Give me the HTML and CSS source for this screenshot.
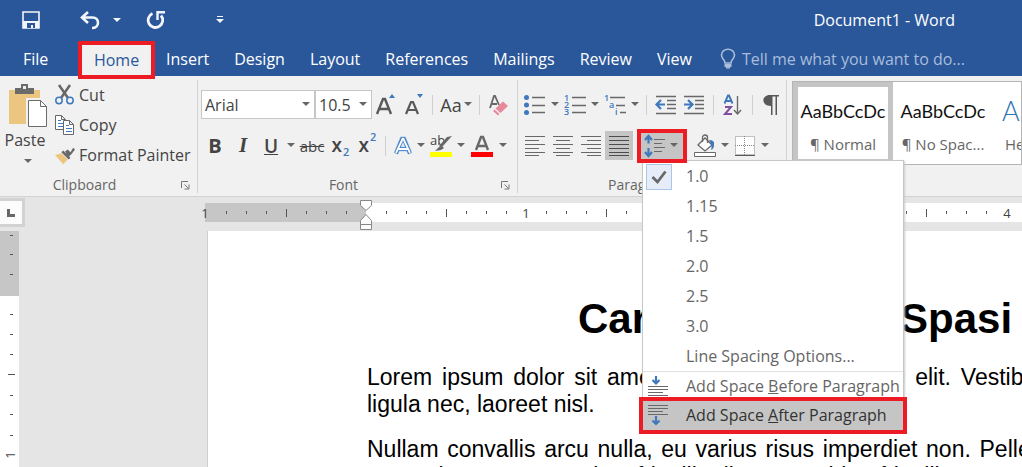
FILE: index.html
```
<!DOCTYPE html>
<html lang="en">
<head>
<meta charset="utf-8">
<title>Document1 - Word</title>
<link rel="stylesheet" href="styles.css">
</head>
<body>
<div class="app">
  <header class="titlebar">
    <div class="quick">
      <button class="qbtn" aria-label="Save"><svg width="18" height="18" viewBox="0 0 18 18"><path d="M1 1h16v16H1z" fill="none" stroke="#f3f6fb" stroke-width="1.6"/><path d="M1 10h16v7H1z" fill="#f3f6fb"/><path d="M5 12h8v5h-2v-3H9v3H5z" fill="#2a579a"/></svg></button>
      <button class="qbtn qbtn-undo" aria-label="Undo"><svg width="20" height="19" viewBox="0 0 20 19"><path d="M8 1L2 6.500l6 5.500M3 6.500h9.500c3.500 0 5.500 2.300 5.500 5.200s-2.200 5.300-6 5.300" fill="none" stroke="#f3f6fb" stroke-width="2.600"/></svg></button>
      <button class="qcaret" aria-label="Undo history"><svg width="8" height="5"><path d="M0 0h8L4 4z" fill="#f3f6fb"/></svg></button>
      <button class="qbtn qbtn-redo" aria-label="Repeat"><svg width="20" height="20" viewBox="0 0 20 20"><path d="M6.500 3.500A7.300 7.300 0 1 0 15 5.500" fill="none" stroke="#f3f6fb" stroke-width="2.800"/><path d="M11.500 10V2.200H19" fill="none" stroke="#f3f6fb" stroke-width="2.400"/></svg></button>
      <button class="qbtn qbtn-more" aria-label="Customize Quick Access Toolbar"><svg width="8" height="8"><path d="M1 .500h6" stroke="#f3f6fb"/><path d="M0 3h8L4 7z" fill="#f3f6fb"/></svg></button>
    </div>
    <div class="doc-name">Document1 - Word</div>
  </header>

  <nav class="tabs">
    <a class="tab tab-file" href="#file">File</a>
    <a class="tab tab-home" href="#home">Home</a>
    <a class="tab" href="#insert">Insert</a>
    <a class="tab" href="#design">Design</a>
    <a class="tab" href="#layout">Layout</a>
    <a class="tab" href="#references">References</a>
    <a class="tab" href="#mailings">Mailings</a>
    <a class="tab" href="#review">Review</a>
    <a class="tab" href="#view">View</a>
    <a class="tell" href="#tell"><svg width="16" height="20" viewBox="0 0 16 20"><path d="M5 14c0-3-3.500-4-3.500-8a6.200 5.500 0 0 1 13 0c0 4-3.500 5-3.500 8z" fill="none" stroke="#a9bddb" stroke-width="1.600"/><path d="M4.500 15h7v3h-1.500v1.500H6V18H4.500z" fill="#a9bddb"/></svg>Tell me what you want to do...</a>
  </nav>

  <main class="ribbon">
    <section class="group clipboard">
      <div class="clip-body">
        <button class="paste"><svg width="39" height="44" viewBox="0 0 39 44"><path d="M0 6h31v34H0z" fill="#ecc680"/><path d="M6 4h6V0h7v4h6v6H6z" fill="#6b6b6b"/><path d="M14 2h3v3h-3z" fill="#f1f1f1"/><path d="M17 14h22v30H17z" fill="#f1f1f1"/><path d="M19.500 16.500h12l6 6v20h-18z" fill="#fff" stroke="#6b6b6b"/><path d="M31.500 16.500v6h6" fill="none" stroke="#6b6b6b"/></svg><span>Paste</span><svg class="caret" width="8" height="5"><path d="M0 0h8L4 4z"/></svg></button>
        <div class="clip-list">
          <button><svg width="20" height="20" viewBox="0 0 20 20"><path d="M4 0l9 13M15 0L6 13" stroke="#686868" stroke-width="2.500"/><circle cx="4" cy="15.500" r="3.200" fill="none" stroke="#3f78bd" stroke-width="1.500"/><circle cx="15" cy="15.500" r="3.200" fill="none" stroke="#3f78bd" stroke-width="1.500"/></svg>Cut</button>
          <button><svg width="20" height="20" viewBox="0 0 20 20"><path d="M.500.500h6l4 4v10H.500zM6.500.500v4h4" fill="#fff" stroke="#686868"/><path d="M3 5.500h3M3 8.500h5M3 11.500h5" stroke="#3f78bd"/><path d="M8.500 5.500h6l4 4v10h-10zM14.500 5.500v4h4" fill="#fff" stroke="#686868"/><path d="M11 10.500h3M11 13.500h6M11 16.500h6" stroke="#3f78bd"/></svg>Copy</button>
          <button><svg width="22" height="19" viewBox="0 0 22 19"><path d="M0 9l7-2 7 7-5 5z" fill="#ecc680"/><path d="M7 6l2-2 8 8-2 2zM11 5l3-2 3 3 3-5 2 2-4 5-3 3z" fill="#686868"/></svg>Format Painter</button>
        </div>
      </div>
      <footer class="group-label">Clipboard<button class="launch" aria-label="Clipboard settings"><svg width="9" height="9"><path d="M.500 7V.500H7M3.500 3.500L7 7M8 3.500V8H3.500" fill="none" stroke="#777"/></svg></button></footer>
    </section>

    <section class="group font">
      <div class="rows">
        <div class="row row-font">
          <button class="combo combo-name">Arial<svg class="caret" width="8" height="5"><path d="M0 0h8L4 4z"/></svg></button>
          <button class="combo combo-size">10.5<svg class="caret" width="8" height="5"><path d="M0 0h8L4 4z"/></svg></button>
          <button class="tool" aria-label="Grow font"><svg width="20" height="22" viewBox="0 0 20 22"><path d="M1 20L7 5h2l6 15M3.500 15h9" fill="none" stroke="#595959" stroke-width="2.400"/><path d="M13 4l3-4 3 4z" fill="#3f78bd"/></svg></button>
          <button class="tool" aria-label="Shrink font"><svg width="20" height="22" viewBox="0 0 20 22"><path d="M2 20L7 8h2l5 12M4 16h8" fill="none" stroke="#595959" stroke-width="2.200"/><path d="M13 0l3 4 3-4z" fill="#3f78bd"/></svg></button>
          <i class="sep"></i>
          <button class="tool tool-case">Aa<svg class="caret" width="8" height="5"><path d="M0 0h8L4 4z"/></svg></button>
          <i class="sep"></i>
          <button class="tool tool-wide" aria-label="Clear formatting"><svg width="20" height="22" viewBox="0 0 20 22"><path d="M1 14L5 2h1l4 9M3 10h5" fill="none" stroke="#686868" stroke-width="1.800"/><path d="M14 7.500l5 4.500-7.500 7-5-4.500z" fill="#e8889b"/><path d="M5.500 15.500l5 4.500-1.500 1.500-5-4.500z" fill="#e8889b"/></svg></button>
        </div>
        <div class="row row-style">
          <button class="tool bold">B</button>
          <button class="tool italic">I</button>
          <button class="tool underline">U</button>
          <button class="drop" aria-label="Underline styles"><svg class="caret" width="8" height="5"><path d="M0 0h8L4 4z"/></svg></button>
          <button class="tool strike">abc</button>
          <button class="tool script">x<sub>2</sub></button>
          <button class="tool script">x<sup>2</sup></button>
          <i class="sep"></i>
          <button class="tool tool-slim" aria-label="Text effects"><svg width="20" height="22" viewBox="0 0 20 22"><path d="M3 18.500L9 4h2l6 14.500M5.500 14h9" fill="none" stroke="#a9cdf0" stroke-width="5"/><path d="M3 18.500L9 4h2l6 14.500M5.500 14h9" fill="none" stroke="#3f78bd" stroke-width="3.600"/><path d="M3 18L9.500 4h1L17 18M5.500 14h9" fill="none" stroke="#fff" stroke-width="1.800"/></svg></button>
          <button class="drop" aria-label="Text effect options"><svg class="caret" width="8" height="5"><path d="M0 0h8L4 4z"/></svg></button>
          <button class="tool" aria-label="Highlight"><svg width="22" height="22" viewBox="0 0 22 22"><text x="0" y="10" class="glyph">ab</text><path d="M22 1l-10 11-3-1 8-9zM11 10l3 3-3 2-6 1z" fill="#686868"/><path d="M0 17h22v5H0z" fill="#ff0"/></svg></button>
          <button class="drop" aria-label="Highlight colors"><svg class="caret" width="8" height="5"><path d="M0 0h8L4 4z"/></svg></button>
          <button class="tool tool-wide" aria-label="Font color"><svg width="22" height="22" viewBox="0 0 22 22"><path d="M5 15L10 2h2l5 13M7 11h8" fill="none" stroke="#686868" stroke-width="2.400"/><path d="M0 17h22v5H0z" fill="red"/></svg></button>
          <button class="drop" aria-label="Font colors"><svg class="caret" width="8" height="5"><path d="M0 0h8L4 4z"/></svg></button>
        </div>
      </div>
      <footer class="group-label">Font<button class="launch" aria-label="Font settings"><svg width="9" height="9"><path d="M.500 7V.500H7M3.500 3.500L7 7M8 3.500V8H3.500" fill="none" stroke="#777"/></svg></button></footer>
    </section>

    <section class="group paragraph">
      <div class="rows">
        <div class="row row-list">
          <button class="tool" aria-label="Bullets"><svg width="22" height="20" viewBox="0 0 22 20"><path d="M8 2.500h13M8 10.500h13M8 17.500h13" stroke="#686868" stroke-width="1.400"/><g fill="#3f78bd"><circle cx="2.500" cy="2.500" r="2.500"/><circle cx="2.500" cy="10" r="2.500"/><circle cx="2.500" cy="17.500" r="2.500"/></g></svg></button>
          <button class="drop" aria-label="Bullet styles"><svg class="caret" width="8" height="5"><path d="M0 0h8L4 4z"/></svg></button>
          <button class="tool" aria-label="Numbering"><svg width="22" height="22" viewBox="0 0 22 22"><path d="M8 3.500h14M8 11.500h14M8 18.500h14" stroke="#686868" stroke-width="1.400"/><g class="num"><text x="0" y="7">1</text><text x="0" y="14">2</text><text x="0" y="21">3</text></g></svg></button>
          <button class="drop" aria-label="Numbering styles"><svg class="caret" width="8" height="5"><path d="M0 0h8L4 4z"/></svg></button>
          <button class="tool" aria-label="Multilevel list"><svg width="22" height="22" viewBox="0 0 22 22"><path d="M6 3.500h15M12 11.500h9M16 18.500h6" stroke="#686868" stroke-width="1.400"/><g class="num"><text x="0" y="7">1</text><text x="5" y="14">a</text><text x="11" y="21">i</text></g></svg></button>
          <button class="drop" aria-label="Multilevel styles"><svg class="caret" width="8" height="5"><path d="M0 0h8L4 4z"/></svg></button>
          <i class="sep"></i>
          <button class="tool" aria-label="Decrease indent"><svg width="22" height="20" viewBox="0 0 22 20"><path d="M1 1.500h20M12 5.500h9M12 9.500h9M12 13.500h9M1 18.500h20" stroke="#686868" stroke-width="1.400"/><path d="M10 9.500H2M6 5L1.500 9.500 6 14" fill="none" stroke="#3f78bd" stroke-width="2.200"/></svg></button>
          <button class="tool" aria-label="Increase indent"><svg width="22" height="20" viewBox="0 0 22 20"><path d="M1 1.500h20M12 5.500h9M12 9.500h9M12 13.500h9M1 18.500h20" stroke="#686868" stroke-width="1.400"/><path d="M1 9.500h8M5 5l4.500 4.500L5 14" fill="none" stroke="#3f78bd" stroke-width="2.200"/></svg></button>
          <i class="sep"></i>
          <button class="tool" aria-label="Sort"><svg width="20" height="22" viewBox="0 0 20 22"><path d="M1.500 9.500L5 1.500h1l3.500 8M3 7h5" fill="none" stroke="#3f78bd" stroke-width="1.900"/><path d="M2 13h6L2 20h7" fill="none" stroke="#8050a0" stroke-width="2"/><path d="M14.500 2v18M11 16l3.500 4 3.500-4" fill="none" stroke="#686868" stroke-width="1.400"/></svg></button>
          <i class="sep"></i>
          <button class="tool tool-slim" aria-label="Show marks"><svg width="16" height="20" viewBox="0 0 16 20"><path d="M7 0h9v1.500h-2V20h-1.500V1.500h-3V20H8v-9C-2 11-2 0 7 0z" fill="#595959"/></svg></button>
        </div>
        <div class="row row-align">
          <button class="tool" aria-label="Align left"><svg width="20" height="20"><path d="M0 .500h20M0 4.500h14M0 8.500h20M0 12.500h14M0 16.500h20M0 19.500h14" stroke="#686868"/></svg></button>
          <button class="tool" aria-label="Center"><svg width="20" height="20"><path d="M0 .500h20M3 4.500h14M0 8.500h20M3 12.500h14M0 16.500h20M3 19.500h14" stroke="#686868"/></svg></button>
          <button class="tool" aria-label="Align right"><svg width="20" height="20"><path d="M0 .500h20M6 4.500h14M0 8.500h20M6 12.500h14M0 16.500h20M6 19.500h14" stroke="#686868"/></svg></button>
          <button class="tool active" aria-label="Justify" aria-pressed="true"><svg width="20" height="20"><path d="M0 .500h20M0 4.500h20M0 8.500h20M0 12.500h20M0 16.500h20M0 19.500h20" stroke="#4c4c4c"/></svg></button>
          <div class="spacing">
            <button class="spacing-btn" aria-label="Line and paragraph spacing" aria-expanded="true"><svg width="22" height="22" viewBox="0 0 22 22"><path d="M4.500 1.500v7M1 5l3.500-4L8 5M4.500 13v7.500M1 17l3.500 4L8 17" fill="none" stroke="#3f78bd" stroke-width="2.200"/><path d="M10 4.500h11M10 8.500h8M10 12.500h11M10 16.500h8" stroke="#686868"/></svg><svg class="caret" width="8" height="5"><path d="M0 0h8L4 4z"/></svg></button>
            <div class="menu" role="menu">
              <button class="item" role="menuitem"><span class="check"><svg width="16" height="14"><path d="M1.500 7l5 5 8-10.500" fill="none" stroke="#686868" stroke-width="2.800"/></svg></span>1.0</button>
              <button class="item" role="menuitem">1.15</button>
              <button class="item" role="menuitem">1.5</button>
              <button class="item" role="menuitem">2.0</button>
              <button class="item" role="menuitem">2.5</button>
              <button class="item" role="menuitem">3.0</button>
              <button class="item" role="menuitem">Line Spacing Options...</button>
              <div class="menu-end">
                <button class="item item-icon" role="menuitem"><svg width="20" height="20" viewBox="0 0 20 20"><path d="M8 0v7M4.500 4L8 7.500 11.500 4" fill="none" stroke="#3f78bd" stroke-width="2.200"/><path d="M0 10.500h20M0 13.500h20M0 16.500h15M0 19.500h20" stroke="#686868"/></svg><span>Add Space <u>B</u>efore Paragraph</span></button>
                <button class="item item-icon item-active" role="menuitem"><svg width="20" height="20" viewBox="0 0 20 20"><path d="M0 .500h20M0 3.500h20M0 6.500h15M0 9.500h20" stroke="#686868"/><path d="M8 11v8M4.500 15.500L8 19l3.500-3.500" fill="none" stroke="#3f78bd" stroke-width="2.200"/></svg><span>Add Space <u>A</u>fter Paragraph</span></button>
              </div>
            </div>
          </div>
          <button class="tool" aria-label="Shading"><svg width="22" height="22" viewBox="0 0 22 22"><path d="M4 10l7-7 7 7-7 6z" fill="#fff" stroke="#686868" stroke-width="1.300"/><path d="M8.500 7V2.500a2.500 2.500 0 0 1 5 0V8" fill="none" stroke="#686868" stroke-width="1.300"/><path d="M15 5q6 0 5 5 0 4-3 5 1-4 0-6z" fill="#3f78bd"/><path d="M.500 17.500h21v4H.500z" fill="#fff" stroke="#686868"/></svg></button>
          <button class="drop" aria-label="Shading colors"><svg class="caret" width="8" height="5"><path d="M0 0h8L4 4z"/></svg></button>
          <button class="tool" aria-label="Borders"><svg width="20" height="20"><path d="M.500.500h19v18H.500zM9.500 0v19M0 9.500h19" fill="#fff" stroke="#888" stroke-dasharray="1 1"/><path d="M0 19.500h20" stroke="#595959"/></svg></button>
          <button class="drop" aria-label="Border styles"><svg class="caret" width="8" height="5"><path d="M0 0h8L4 4z"/></svg></button>
        </div>
      </div>
      <footer class="group-label">Paragraph</footer>
    </section>

    <section class="styles">
      <div class="gallery">
        <button class="style style-on"><span class="sample">AaBbCcDc</span><span class="style-name">¶ Normal</span></button>
        <button class="style"><span class="sample">AaBbCcDc</span><span class="style-name">¶ No Spac...</span></button>
        <button class="style style-head"><span class="sample">AaBbCc</span><span class="style-name">Heading 1</span></button>
      </div>
    </section>
  </main>

  <div class="workspace">
    <button class="tab-stop" aria-label="Left tab"><svg width="8" height="8"><path d="M1.500 0v6.500H8" fill="none" stroke="#686868" stroke-width="3"/></svg></button>
    <div class="hruler">
      <svg class="hscale" width="100%" height="37">
        <defs>
          <pattern id="ticks" x="162" width="160" height="19" y="5" patternUnits="userSpaceOnUse"><path d="M20.500 8v3M40.500 8v3M60.500 8v3M80.500 6v8M100.500 8v3M120.500 8v3M140.500 8v3" stroke="#555"/></pattern>
        </defs>
        <rect x="1" y="5" width="161" height="19" fill="#c6c6c6"/>
        <rect x="162" y="5" width="100%" height="19" fill="#fff"/>
        <rect x="4" y="5" width="100%" height="19" fill="url(#ticks)"/>
        <g class="digits"><text x="1" y="20">1</text><text x="322" y="20">1</text><text x="482" y="20">2</text><text x="642" y="20">3</text><text x="803" y="20">4</text></g>
        <path d="M156.500 2.500h11v5l-5.500 5-5.500-5zM156.500 31.500v-9l5.500-6 5.500 6v9zM156.500 26.500h11" fill="#fff" stroke="#888"/>
      </svg>
    </div>
    <div class="vruler">
      <svg width="20" height="100%">
        <rect width="19" height="65" fill="#c6c6c6"/><rect y="65" width="19" height="100%" fill="#fff"/>
        <path d="M10 4.500h3M10 23.500h3M10 43.500h3M10 83.500h3M10 103.500h3M10 123.500h3M8 143.500h7M10 164.500h3M10 183.500h3M10 204.500h3" stroke="#555"/>
        <g class="digits"><text transform="translate(15 224) rotate(-90)">1</text></g>
      </svg>
    </div>
    <article class="page">
      <h1><span>Cara Mengatur</span><span>Spasi</span></h1>
      <p><span class="line">Lorem ipsum dolor sit amet, consectetur adipiscing elit. Vestibulum elementum dignissim lorem</span><span class="line-end">ligula nec, laoreet nisl.</span></p>
      <p><span class="line">Nullam convallis arcu nulla, eu varius risus imperdiet non. Pellentesque habitant morbi senectus</span><span class="line-end">tortor vitae metus. Proin a fringilla diam. Curabitur fringilla</span></p>
    </article>
  </div>
</div>
</body>
</html>
```
FILE: styles.css
```
* { box-sizing: border-box; }
body { margin: 0; font: 16px/20px "Open Sans", "Noto Sans", sans-serif; color: #444; overflow: hidden; }
button { margin: 0; padding: 0; border: 0; background: none; font: inherit; color: inherit; }
svg { display: block; flex: none; overflow: visible; }
.app { display: flex; flex-direction: column; height: 100vh; overflow: hidden; }
.caret { fill: #666; }

.titlebar { display: flex; align-items: center; height: 40px; padding: 0 67px 0 22px; background: #2a579a; color: #fff; }
.quick { display: flex; align-items: center; height: 36px; }
.qbtn-undo { margin-left: 40px; }
.qcaret { margin-left: 13px; }
.qbtn-redo { margin-left: 25px; }
.qbtn-more { margin-left: 50px; }
.doc-name { margin-left: auto; white-space: nowrap; }

.tabs { display: flex; align-items: stretch; height: 36px; background: #2a579a; color: #fff; flex: none; }
.tabs a { color: inherit; text-decoration: none; white-space: nowrap; }
.tab { display: flex; align-items: center; padding: 2px 12px 0 13px; }
.tab-file { width: 78px; padding-left: 23px; }
.tab-home { position: relative; z-index: 1; width: 77px; height: 38px; justify-content: center; padding: 0; border: 4px solid #ed1c24; background: #f1f1f1; margin: 1px -2px 0 0; }
.tabs .tab-home { color: #2a579a; }
.tabs .tell { display: flex; align-items: center; gap: 6px; margin-left: 16px; padding-top: 2px; color: #a9bddb; }

.ribbon { display: flex; height: 121px; background: #f1f1f1; border-bottom: 1px solid #d2d2d2; flex: none; }
.group { display: flex; flex-direction: column; flex: none; margin: 4px 0 3px; border-right: 1px solid #d4d4d4; }
.clipboard { width: 198px; }
.font { width: 320px; }
.paragraph { width: 269px; }
.group-label { display: flex; justify-content: center; align-items: center; position: relative; margin-top: auto; height: 16px; padding-right: 28px; font-size: 14px; line-height: 16px; color: #666; }
.paragraph .group-label { padding-right: 20px; }
.launch { position: absolute; right: 7px; top: 4px; }

.clip-body { display: flex; }
.paste { display: flex; flex-direction: column; align-items: center; width: 50px; padding: 4px 0 0 6px; }
.paste span { margin: 2px 0 9px -6px; }
.clip-list { display: flex; flex-direction: column; }
.clip-list button { display: flex; align-items: center; gap: 4px; height: 30px; padding-left: 5px; white-space: nowrap; }
.clip-list svg { width: 20px; }

.rows { display: flex; flex-direction: column; gap: 12px; padding: 10px 0 0 3px; }
.row { display: flex; align-items: center; height: 29px; }
.tool { display: flex; align-items: center; justify-content: center; flex: none; width: 28px; height: 29px; }
.tool-wide { width: 30px; }
.tool-slim { width: 25px; }
.tool-case { width: 38px; gap: 2px; font-size: 18px; }
.drop { display: flex; align-items: center; justify-content: center; flex: none; width: 12px; height: 29px; }
.sep { flex: none; width: 1px; height: 20px; margin: 0 4px; background: #d0d0d0; }
.row-list .sep { margin: 0 5px; }
.combo { display: flex; align-items: center; justify-content: space-between; height: 29px; padding: 0 4px 0 3px; border: 1px solid #c6c6c6; background: #fff; }
.combo-name { width: 114px; }
.combo-size { width: 57px; }
.bold { font-weight: 700; font-size: 20px; }
.italic { font: italic 700 21px "Liberation Serif", serif; }
.underline { font-weight: 600; font-size: 19px; text-decoration: underline; }
.strike { width: 30px; font-size: 15px; text-decoration: line-through; }
.script { align-items: flex-start; width: 27px; gap: 1px; font-size: 19px; font-weight: 600; line-height: 29px; }
.script sub, .script sup { color: #3f78bd; font-size: 11px; line-height: 12px; }
.script sub { margin-top: 15px; }
.glyph { font-size: 13px; fill: #444; }
.num { font-size: 9px; font-weight: 600; fill: #3f78bd; }
.active { background: #c5c5c5; }

.spacing { position: relative; margin: 0 4px; }
.spacing-btn { position: relative; z-index: 3; display: flex; align-items: center; justify-content: space-between; width: 50px; height: 34px; padding: 0 5px 0 3px; border: 4px solid #ed1c24; background: #c5c5c5; }
.menu { position: absolute; z-index: 2; top: 31px; left: 5px; width: 262px; border: 1px solid #c6c6c6; background: #fff; box-shadow: 1px 1px 2px #ccc; color: #666; }
.item { position: relative; display: flex; align-items: center; width: 100%; height: 30px; padding-left: 43px; text-align: left; font-size: 16px; white-space: nowrap; }
.check { position: absolute; left: 3px; top: 3px; display: grid; place-items: center; width: 26px; height: 26px; border: 1px solid #a9c7ea; background: #e6edf8; }
.menu-end { border-top: 1px solid #e1e1e1; }
.item-icon { height: 29px; padding-left: 5px; gap: 18px; }
.item-active { background: #c5c5c5; color: #333; outline: 4px solid #ed1c24; }

.styles { flex: 1; min-width: 0; padding: 5px 0 0 5px; }
.gallery { display: flex; height: 84px; border: 1px solid #b5b5b5; background: #fff; overflow: hidden; }
.style { display: flex; flex: none; flex-direction: column; align-items: center; width: 100px; height: 82px; padding-top: 10px; border: 5px solid transparent; overflow: hidden; }
.style-on { border-color: #c5c5c5; }
.sample { height: 37px; line-height: 28px; font-size: 18px; font-family: Lato, sans-serif; color: #111; }
.style-head { align-items: flex-start; padding-left: 4px; }
.style-head .sample { font-size: 27px; color: #2e74b5; font-weight: 300; }
.style-head .style-name { padding-left: 3px; }
.style-name { font-size: 15px; line-height: 20px; color: #666; white-space: nowrap; }

.workspace { display: grid; grid-template-columns: 25px 179px 1fr; grid-template-rows: 33px 1fr; flex: 1; min-height: 0; padding-top: 1px; background: #e5e5e5; }
.tab-stop { display: grid; place-items: center; width: 25px; height: 29px; border: 3px solid #d2d2d2; border-left: 0; background: #fcfcfc; }
.hruler { grid-column: 3; height: 33px; min-width: 0; }
.digits { font-size: 13px; fill: #444; text-anchor: middle; }
.vruler { overflow: hidden; }
.page { grid-column: 3; margin-left: 3px; padding: 62px 0 0 159px; border-left: 1px solid #d0d0d0; background: #fff; color: #000; font: 23px/27px "Liberation Sans", Arial, sans-serif; overflow: hidden; }
.page h1 { display: flex; gap: 28px; margin: 0 0 19px 211px; font-size: 42px; line-height: 52px; white-space: nowrap; }
.page p { width: 1003px; margin: 0 0 18px; }
.line { display: block; text-align: justify; text-align-last: justify; }
.line-end { display: block; }
```
